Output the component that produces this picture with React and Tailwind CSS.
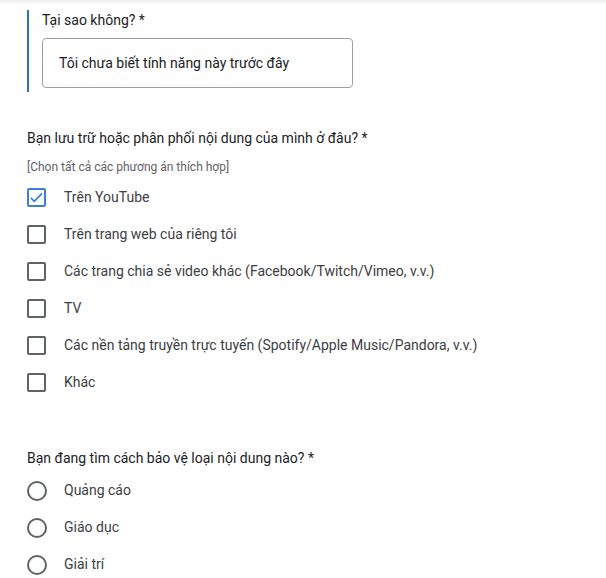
import React from 'react'

const sources = [
  { label: 'Trên YouTube', checked: true },
  { label: 'Trên trang web của riêng tôi' },
  { label: 'Các trang chia sẻ video khác (Facebook/Twitch/Vimeo, v.v.)' },
  { label: 'TV' },
  { label: 'Các nền tảng truyền trực tuyến (Spotify/Apple Music/Pandora, v.v.)' },
  { label: 'Khác' },
]

const contentTypes = ['Quảng cáo', 'Giáo dục', 'Giải trí']

function Checkbox({ checked }) {
  return (
    <span className={`flex h-[19px] w-[19px] shrink-0 items-center justify-center rounded-[2px] border-2 ${checked ? 'border-[#3b7ddd]' : 'border-[#5f6368]'}`}>
      {checked && (
        <svg viewBox="0 0 24 24" className="block h-[15px] w-[15px] shrink-0" fill="none" stroke="#3b7ddd" strokeWidth="2.8">
          <path d="M3 12.5l5.5 5.5L21 5.5" />
        </svg>
      )}
    </span>
  )
}

export default function App() {
  return (
    <div className="relative min-h-[578px] w-[606px] bg-white text-[#202124]" style={{ fontFamily: 'Roboto, "Noto Sans", sans-serif' }}>
      <div className="absolute inset-x-0 top-0 h-[4px] bg-gradient-to-b from-[#ececec] to-white" />

      <div className="pl-[27px] pt-[10px]">
        <div className="flex border-l-2 border-[#2f6fc4] pl-[13px] pb-[4px]">
          <div>
            <p className="text-[14px] leading-[18px] pt-[1px]">Tại sao không? *</p>
            <div className="mt-[9px] flex h-[50px] w-[311px] items-center rounded-[4px] border border-[#9aa0a6] px-[16px] text-[14px]">
              Tôi chưa biết tính năng này trước đây
            </div>
          </div>
        </div>

        <p className="mt-[37px] text-[14px] leading-[18px]">Bạn lưu trữ hoặc phân phối nội dung của mình ở đâu? *</p>
        <p className="mt-[13px] text-[12px] leading-[14px] text-[#5f6368]">[Chọn tất cả các phương án thích hợp]</p>

        <div className="mt-[5px] flex flex-col">
          {sources.map(s => (
            <div key={s.label} className="flex h-[37px] items-center">
              <Checkbox checked={s.checked} />
              <span className="ml-[18px] text-[14px] text-[#3c4043]">{s.label}</span>
            </div>
          ))}
        </div>

        <p className="mt-[48px] text-[14px] leading-[18px]">Bạn đang tìm cách bảo vệ loại nội dung nào? *</p>

        <div className="mt-[5px] flex flex-col">
          {contentTypes.map(t => (
            <div key={t} className="flex h-[37px] items-center">
              <span className="h-[20px] w-[20px] shrink-0 rounded-full border-2 border-[#5f6368]" />
              <span className="ml-[17px] text-[14px] text-[#3c4043]">{t}</span>
            </div>
          ))}
        </div>
      </div>
    </div>
  )
}
